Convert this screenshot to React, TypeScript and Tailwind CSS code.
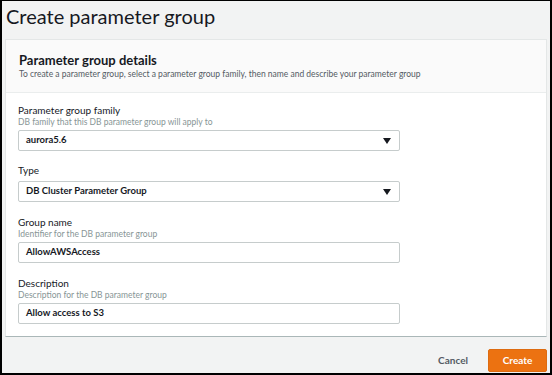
import React from "react";

const font = { fontFamily: 'Lato, "Liberation Sans", sans-serif' };

function Field({
  label,
  hint,
  value,
  select,
  className,
}: {
  label: string;
  hint?: string;
  value: string;
  select?: boolean;
  className?: string;
}) {
  return (
    <div className={className}>
      <div className="text-[10px] leading-[13px] text-[#16191f]">{label}</div>
      {hint && (
        <div className="text-[8.5px] leading-[11px] text-[#879596]">{hint}</div>
      )}
      <div
        className={`${hint ? "mt-[2px]" : "mt-[4px]"} flex h-[21px] w-[382px] items-center justify-between rounded-[2px] border border-[#c6cccc] bg-white pl-[7px] pr-[8px]`}
      >
        <span className="text-[9.5px] font-bold text-[#16191f]">{value}</span>
        {select && (
          <svg width="8" height="6" viewBox="0 0 8 6">
            <path d="M0 0 L8 0 L4 6 Z" fill="#16191f" />
          </svg>
        )}
      </div>
    </div>
  );
}

export default function App() {
  return (
    <div
      className="flex h-[375px] w-[552px] flex-col border-x-2 border-b-2 border-t border-black bg-[#f2f3f3]"
      style={font}
    >
      <h1 className="h-[38px] pl-[4px] pt-[1px] text-[20px] leading-[28px] text-[#16191f]">
        Create parameter group
      </h1>

      <div className="ml-[3px] w-[542px] border border-[#e4e7e7] border-b-[#aab7b8] bg-white">
        <div className="h-[53px] border-b border-[#eaeded] bg-[#fafafa] pl-[13px] pt-[12px]">
          <h2 className="text-[13px] font-bold leading-[16px] text-[#16191f]">
            Parameter group details
          </h2>
          <p className="text-[8.5px] leading-[12px] text-[#545b64]">
            To create a parameter group, select a parameter group family, then name and describe your parameter group
          </p>
        </div>

        <div className="flex flex-col pb-[12px] pl-[12px] pt-[11px]">
          <Field
            label="Parameter group family"
            hint="DB family that this DB parameter group will apply to"
            value="aurora5.6"
            select
          />
          <Field
            className="mt-[13px]"
            label="Type"
            value="DB Cluster Parameter Group"
            select
          />
          <Field
            className="mt-[14px]"
            label="Group name"
            hint="Identifier for the DB parameter group"
            value="AllowAWSAccess"
          />
          <Field
            className="mt-[14px]"
            label="Description"
            hint="Description for the DB parameter group"
            value="Allow access to S3"
          />
        </div>
      </div>

      <div className="mr-[3px] mt-[12px] flex items-center justify-end gap-[20px]">
        <button className="text-[10px] font-bold text-[#545b64]">Cancel</button>
        <button className="h-[23px] w-[59px] rounded-[2px] border border-[#dd6b10] bg-[#ec7211] text-[10px] font-bold text-white">
          Create
        </button>
      </div>
    </div>
  );
}
